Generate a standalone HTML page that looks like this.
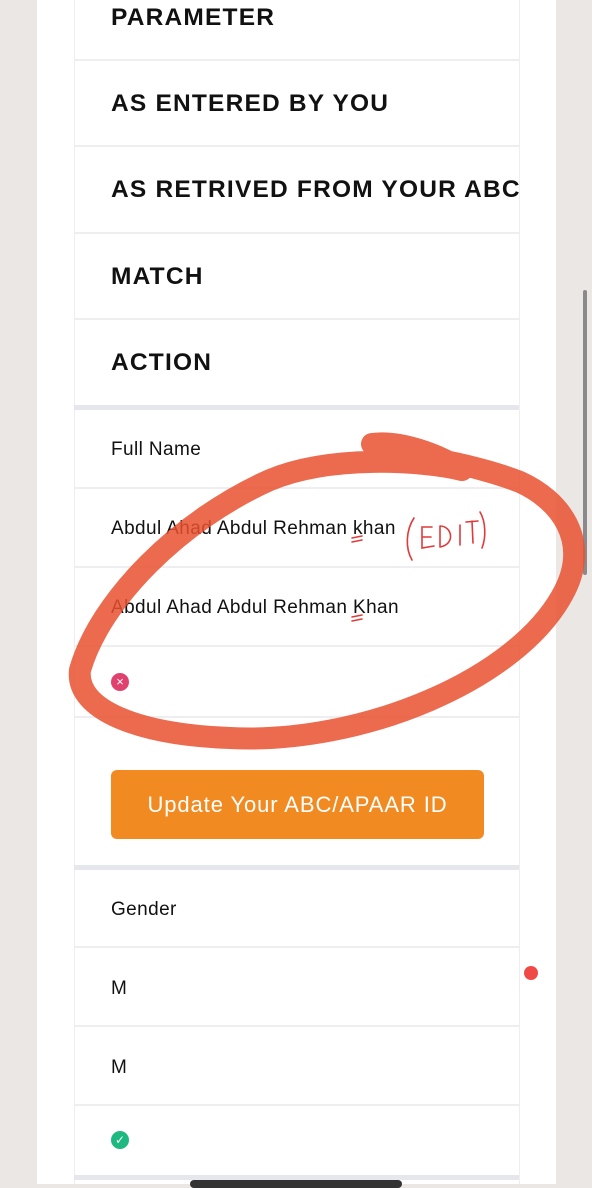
<!DOCTYPE html>
<html><head><style>
body{margin:0;width:592px;height:1184px;background:#ebe7e5;position:relative;overflow:hidden;font-family:"Liberation Sans",sans-serif;}
.panel{position:absolute;left:37px;top:0;width:519px;height:1184px;background:#fff;}
.tbl{position:absolute;left:74px;top:0;width:444px;height:1184px;border-left:1px solid #eeeef0;border-right:1px solid #eeeef0;}
.h{position:absolute;left:111px;font-weight:bold;font-size:24.5px;color:#111;letter-spacing:1.2px;white-space:nowrap;}
.t{position:absolute;left:111px;font-size:19px;color:#111;white-space:nowrap;letter-spacing:0.4px;}
.ln{position:absolute;left:74px;width:445px;height:2px;background:#eeeef1;}
.thk{position:absolute;left:74px;width:445px;height:5px;background:#e6e7ec;}
</style></head><body>
<div class="panel"></div>
<div class="tbl"></div>
<div class="h" style="top:4px">PARAMETER</div>
<div class="ln" style="top:59px"></div>
<div class="h" style="top:90px">AS ENTERED BY YOU</div>
<div class="ln" style="top:145px"></div>
<div class="h" style="top:176px;width:409px;overflow:hidden">AS RETRIVED FROM YOUR ABC</div>
<div class="ln" style="top:232px"></div>
<div class="h" style="top:263px">MATCH</div>
<div class="ln" style="top:318px"></div>
<div class="h" style="top:349px">ACTION</div>
<div class="thk" style="top:405px"></div>
<div class="t" style="top:439px">Full Name</div>
<div class="ln" style="top:487px"></div>
<div class="t" style="top:518px">Abdul Ahad Abdul Rehman khan</div>
<div class="ln" style="top:566px"></div>
<div class="t" style="top:597px">Abdul Ahad Abdul Rehman Khan</div>
<div class="ln" style="top:645px"></div>
<div style="position:absolute;left:111px;top:673px;width:18px;height:18px;border-radius:50%;background:#e0416e;color:#fff;font-size:13px;line-height:18px;text-align:center">×</div>
<div class="ln" style="top:716px"></div>
<div style="position:absolute;left:111px;top:770px;width:373px;height:69px;background:#f28a22;border-radius:6px;color:#fff;font-size:22px;letter-spacing:0.9px;line-height:69px;text-align:center">Update Your ABC/APAAR ID</div>
<div class="thk" style="top:865px"></div>
<div class="t" style="top:899px">Gender</div>
<div class="ln" style="top:946px"></div>
<div class="t" style="top:978px">M</div>
<div class="ln" style="top:1025px"></div>
<div class="t" style="top:1057px">M</div>
<div class="ln" style="top:1104px"></div>
<div style="position:absolute;left:111px;top:1131px;width:18px;height:18px;border-radius:50%;background:#1eb980;color:#fff;font-size:12px;line-height:18px;text-align:center">✓</div>
<div class="thk" style="top:1175px"></div>
<div style="position:absolute;left:583px;top:290px;width:4px;height:285px;border-radius:2px;background:#8a8a8a"></div>
<div style="position:absolute;left:524px;top:966px;width:14px;height:14px;border-radius:50%;background:#ef4a48"></div>
<div style="position:absolute;left:190px;top:1180px;width:212px;height:8px;border-radius:4px;background:#333"></div>
<svg style="position:absolute;left:0;top:0" width="592" height="1184">
<g fill="none" stroke="#e9502f" stroke-opacity="0.85" stroke-linecap="round" stroke-linejoin="round">
<path d="M372,444 C400,440 440,455 462,470 C420,460 330,455 270,480 C180,520 100,600 80,670 C75,710 140,735 230,738 C360,745 520,680 565,590 C590,540 560,500 520,482 C500,474 470,466 450,462" stroke-width="22"/>
</g>
<g fill="none" stroke="#e03a3a" stroke-width="1.6" stroke-linecap="round">
<path d="M414,518 C406,530 405,548 412,560"/>
<path d="M432,527 L422,527 L422,548 L434,546 M422,537 L431,537"/>
<path d="M440,526 L440,547 M440,526 C452,526 456,544 440,547"/>
<path d="M460,525 L460,545"/>
<path d="M466,522 L478,521 M472,521 L473,543"/>
<path d="M480,512 C486,522 486,538 482,548"/>
<path d="M352,538 L362,536 M352,542 L362,540"/>
<path d="M352,617 L362,615 M352,621 L362,619"/>
</g>
</svg>
</body></html>
